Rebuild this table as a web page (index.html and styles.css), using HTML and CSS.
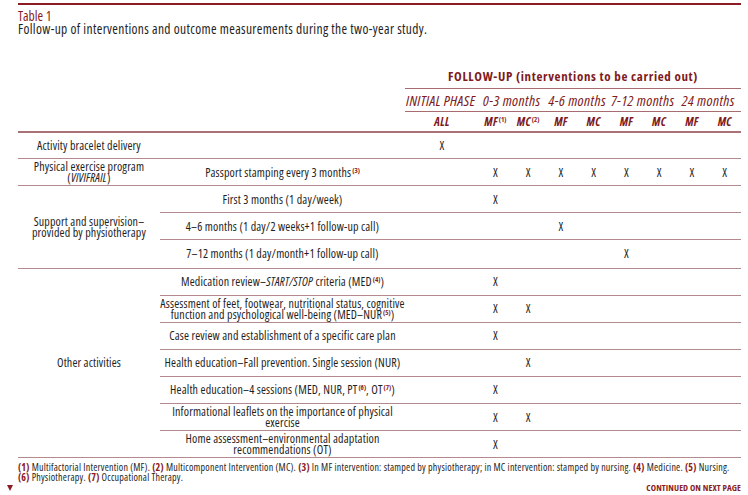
FILE: index.html
```html
<!DOCTYPE html>
<html lang="en">
<head>
<meta charset="utf-8">
<title>Table 1</title>
<link rel="stylesheet" href="styles.css">
</head>
<body>
<div class="page">
  <div class="top-rule"></div>
  <div class="caption">Table 1</div>
  <div class="subtitle">Follow-up of interventions and outcome measurements during the two-year study.</div>

  <table class="tbl">
    <colgroup>
      <col class="c-act">
      <col class="c-det">
      <col class="c-all">
      <col class="c-x"><col class="c-x"><col class="c-x"><col class="c-x">
      <col class="c-x"><col class="c-x"><col class="c-x"><col class="c-x">
    </colgroup>
    <thead>
      <tr class="h1">
        <th rowspan="3" class="blank"></th>
        <th rowspan="3" class="blank"></th>
        <th colspan="9" class="fu">FOLLOW-UP (interventions to be carried out)</th>
      </tr>
      <tr class="h2">
        <th class="ph ph-init">INITIAL PHASE</th>
        <th colspan="2" class="ph">0-3 months</th>
        <th colspan="2" class="ph">4-6 months</th>
        <th colspan="2" class="ph">7-12 months</th>
        <th colspan="2" class="ph">24 months</th>
      </tr>
      <tr class="h3">
        <th class="grp">ALL</th>
        <th class="grp">MF<sup class="ref">(1)</sup></th>
        <th class="grp">MC<sup class="ref">(2)</sup></th>
        <th class="grp">MF</th>
        <th class="grp">MC</th>
        <th class="grp">MF</th>
        <th class="grp">MC</th>
        <th class="grp">MF</th>
        <th class="grp">MC</th>
      </tr>
    </thead>
    <tbody>
      <tr class="r-first">
        <td class="act">Activity bracelet delivery</td>
        <td></td>
        <td class="x">X</td>
        <td></td><td></td><td></td><td></td><td></td><td></td><td></td><td></td>
      </tr>
      <tr>
        <td class="act">Physical exercise program<br>(<i>VIVIFRAIL</i>)</td>
        <td class="det">Passport stamping every 3 months<sup class="ref">(3)</sup></td>
        <td></td>
        <td class="x">X</td><td class="x">X</td><td class="x">X</td><td class="x">X</td>
        <td class="x">X</td><td class="x">X</td><td class="x">X</td><td class="x">X</td>
      </tr>
      <tr>
        <td class="act" rowspan="3">Support and supervision–<br>provided by physiotherapy</td>
        <td class="det">First 3 months (1 day/week)</td>
        <td></td>
        <td class="x">X</td><td></td><td></td><td></td><td></td><td></td><td></td><td></td>
      </tr>
      <tr>
        <td class="det">4–6 months (1 day/2 weeks+1 follow-up call)</td>
        <td></td>
        <td></td><td></td><td class="x">X</td><td></td><td></td><td></td><td></td><td></td>
      </tr>
      <tr class="r-gend">
        <td class="det">7–12 months (1 day/month+1 follow-up call)</td>
        <td></td>
        <td></td><td></td><td></td><td></td><td class="x">X</td><td></td><td></td><td></td>
      </tr>
      <tr class="r-oth">
        <td class="act" rowspan="7">Other activities</td>
        <td class="det">Medication review–<i>START/STOP</i> criteria (MED<sup class="ref">(4)</sup>)</td>
        <td></td>
        <td class="x">X</td><td></td><td></td><td></td><td></td><td></td><td></td><td></td>
      </tr>
      <tr class="r-oth">
        <td class="det">Assessment of feet, footwear, nutritional status, cognitive<br>function and psychological well-being (MED–NUR<sup class="ref">(5)</sup>)</td>
        <td></td>
        <td class="x">X</td><td class="x">X</td><td></td><td></td><td></td><td></td><td></td><td></td>
      </tr>
      <tr class="r-oth">
        <td class="det">Case review and establishment of a specific care plan</td>
        <td></td>
        <td class="x">X</td><td></td><td></td><td></td><td></td><td></td><td></td><td></td>
      </tr>
      <tr class="r-oth">
        <td class="det">Health education–Fall prevention. Single session (NUR)</td>
        <td></td>
        <td></td><td class="x">X</td><td></td><td></td><td></td><td></td><td></td><td></td>
      </tr>
      <tr class="r-oth">
        <td class="det">Health education–4 sessions (MED, NUR, PT<sup class="ref">(6)</sup>, OT<sup class="ref">(7)</sup>)</td>
        <td></td>
        <td class="x">X</td><td></td><td></td><td></td><td></td><td></td><td></td><td></td>
      </tr>
      <tr class="r-oth">
        <td class="det">Informational leaflets on the importance of physical<br>exercise</td>
        <td></td>
        <td class="x">X</td><td class="x">X</td><td></td><td></td><td></td><td></td><td></td><td></td>
      </tr>
      <tr class="r-oth">
        <td class="det">Home assessment–environmental adaptation<br>recommendations (OT)</td>
        <td></td>
        <td class="x">X</td><td></td><td></td><td></td><td></td><td></td><td></td><td></td>
      </tr>
    </tbody>
  </table>

  <p class="notes"><b>(1)</b> Multifactorial Intervention (MF). <b>(2)</b> Multicomponent Intervention (MC). <b>(3)</b> In MF intervention: stamped by physiotherapy; in MC intervention: stamped by nursing. <b>(4)</b> Medicine. <b>(5)</b> Nursing.<br><b>(6)</b> Physiotherapy. <b>(7)</b> Occupational Therapy.</p>
</div>
<div class="foot">
  <span class="tri"></span>
  <span class="cont">CONTINUED ON NEXT PAGE</span>
</div>
</body>
</html>
```

FILE: styles.css
```css
html, body {
  margin: 0;
  padding: 0;
  background: #fff;
}
body {
  font-family: "Open Sans", "Liberation Sans", Arial, sans-serif;
  font-stretch: 75%;
  color: #1e1e1e;
  width: 748px;
  height: 495px;
  overflow: hidden;
}
.page {
  padding: 3px 7px 0 18px;
  width: 723px;
}
.top-rule {
  border-top: 2px solid #8a1c24;
}
.caption,
.subtitle {
  font-size: 13.5px;
  line-height: 12px;
  letter-spacing: 0.35px;
}
.caption {
  color: #8a1c24;
  margin-top: 5px;
  letter-spacing: 0;
}
.subtitle {
  margin-top: 1px;
}
.tbl {
  border-collapse: collapse;
  table-layout: fixed;
  width: 723px;
  margin-top: 29px;
}
.c-act { width: 142px; }
.c-det { width: 245px; }
.c-all { width: 74px; }
.c-x { width: 32.75px; }

.tbl th, .tbl td {
  padding: 0;
  text-align: center;
  vertical-align: middle;
  white-space: nowrap;
}
.tbl th {
  color: #7e1a22;
}
.h1 th.fu {
  height: 24px;
  font-weight: 700;
  font-size: 13px;
  letter-spacing: 0.65px;
  border-bottom: 1px solid #a86c70;
}
.h2 th.ph {
  height: 22px;
  font-style: italic;
  font-weight: 400;
  font-size: 15px;
  letter-spacing: 0.4px;
  border-bottom: 1px solid #a86c70;
}
.h2 th.ph-init {
  text-align: left;
  padding-left: 1px;
  letter-spacing: 0.3px;
}
.h3 th.grp {
  height: 19px;
  font-style: italic;
  font-weight: 700;
  font-size: 12px;
  letter-spacing: 0.3px;
}
thead tr.h3 th, thead th.blank {
  border-bottom: 2px solid #a87276;
}
.ref {
  color: #8a1c24;
  font-weight: 700;
  font-style: normal;
  font-size: 7px;
  letter-spacing: 0;
  line-height: 0;
  vertical-align: 4px;
  margin-left: 1px;
}
.tbl tbody td {
  height: 26px;
  font-size: 12px;
  letter-spacing: 0.15px;
  line-height: 11px;
  border-bottom: 1px solid #b48a8e;
}
.tbl tbody tr.r-first td { height: 25px; }
.tbl tbody tr.r-gend td { height: 27.5px; }
.tbl tbody tr.r-oth td { height: 26.1px; }
.tbl tbody td.x {
  font-size: 12px;
  color: #1e1e1e;
}
.notes {
  margin: 4px 0 0;
  font-size: 10px;
  line-height: 10px;
  letter-spacing: 0.22px;
  color: #1e1e1e;
  white-space: nowrap;
}
.notes b {
  color: #8a1c24;
}
.foot {
  display: flex;
  justify-content: space-between;
  align-items: center;
  padding: 1px 7px 0 7px;
}
.tri {
  width: 0;
  height: 0;
  border-left: 3.5px solid transparent;
  border-right: 3.5px solid transparent;
  border-top: 6px solid #8a1c24;
}
.cont {
  font-weight: 700;
  font-size: 9px;
  letter-spacing: 0.1px;
  line-height: 10px;
  color: #8a1c24;
}
```
